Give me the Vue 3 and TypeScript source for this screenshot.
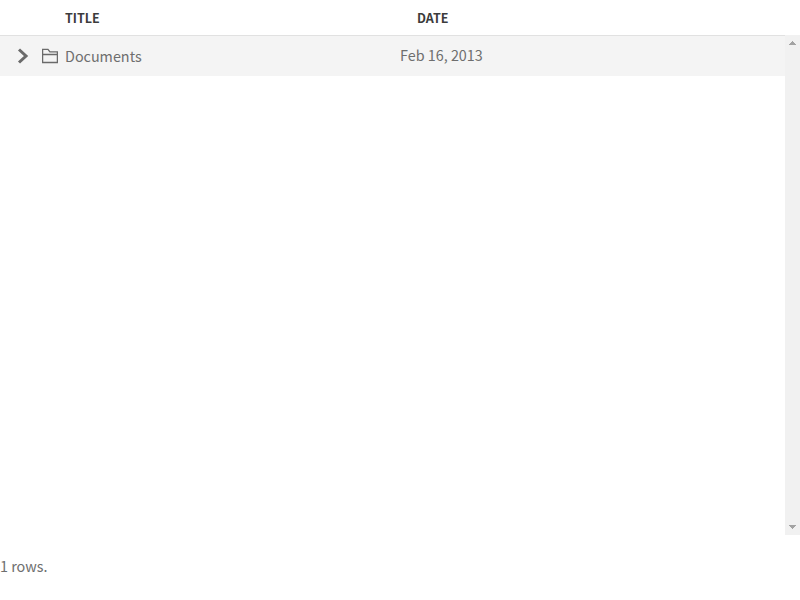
<script setup lang="ts">
interface Row {
  title: string
  date: string
}
const rows: Row[] = [{ title: 'Documents', date: 'Feb 16, 2013' }]
</script>

<template>
  <div class="page">
    <div class="header">
      <div class="head-title">TITLE</div>
      <div class="head-date">DATE</div>
    </div>
    <div class="body">
      <div class="list">
        <div v-for="row in rows" :key="row.title" class="row">
          <div class="cell-title">
            <svg class="chevron" width="12" height="16" viewBox="0 0 12 16"><path d="M2 1.5L9 8L2 14.5" /></svg>
            <svg class="folder" width="16" height="16" viewBox="0 0 16 16"><path d="M.6 14.5V1.3H6L7.9 3.8H15.4V14.5ZM.6 6.5H15.4" /></svg>
            <span>{{ row.title }}</span>
          </div>
          <div class="cell-date">{{ row.date }}</div>
        </div>
      </div>
      <div class="scrollbar">
        <svg width="15" height="15" viewBox="0 0 15 15" shape-rendering="crispEdges"><path d="M7 6h1v1h1v1h1v1h1v1h-7v-1h1v-1h1v-1h1z" /></svg>
        <svg width="15" height="15" viewBox="0 0 15 15" shape-rendering="crispEdges"><path d="M4 5h7v1h-1v1h-1v1h-1v1h-1v-1h-1v-1h-1v-1h-1z" /></svg>
      </div>
    </div>
    <div class="count">{{ rows.length }} rows.</div>
  </div>
</template>

<style>
html, body { margin: 0; background: #fff; }
</style>
<style scoped>
.page { width: 800px; height: 600px; overflow: hidden; font-family: 'Noto Sans CJK SC', sans-serif; font-size: 14.37px; color: #6e6e6e; }
.header { display: flex; height: 35px; line-height: 35px; font-size: 12.55px; font-weight: 700; color: #3c3c3c; }
.head-title { width: 352px; padding-left: 65px; }
.body { display: flex; height: 500px; }
.list { flex: 1; border-top: 1px solid #e1e1e1; }
.row { display: flex; height: 40px; line-height: 40px; background: #f4f4f4; }
.cell-title { display: flex; align-items: center; width: 400px; padding-left: 17px; box-sizing: border-box; }
.cell-date { line-height: 38px; }
.chevron { margin-right: 13px; fill: none; stroke: #6a6a6a; stroke-width: 3; }
.folder { margin-right: 7px; fill: none; stroke: #6a6a6a; stroke-width: 1.3; }
.scrollbar { display: flex; flex-direction: column; justify-content: space-between; width: 15px; background: #f1f1f1; fill: #a3a3a3; }
.count { margin-top: 19px; line-height: 24px; }
</style>
